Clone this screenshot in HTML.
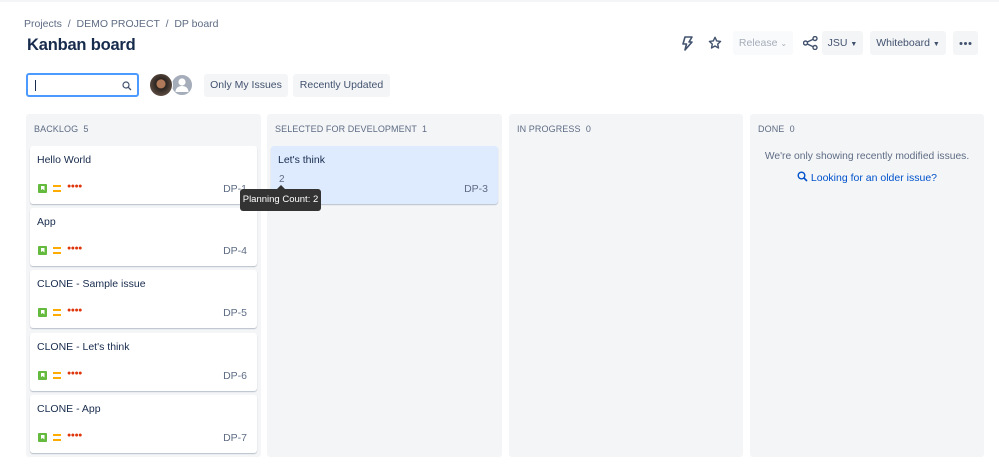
<!DOCTYPE html>
<html><head><meta charset="utf-8"><style>
*{box-sizing:border-box;margin:0;padding:0}
body{width:999px;height:471px;background:#fff;font-family:"Liberation Sans",sans-serif;position:relative;overflow:hidden;color:#172b4d}
.topline{position:absolute;left:0;top:0;width:999px;height:2px;background:#f4f5f7}
.a{position:absolute}
.crumb{left:24px;top:18px;font-size:10.5px;color:#5e6c84}
h1{position:absolute;left:27px;top:36px;font-size:16.5px;font-weight:bold;color:#172b4d;letter-spacing:-0.2px}
.btn{position:absolute;height:24px;background:#f4f5f7;border-radius:3px;font-size:10.5px;color:#42526e;line-height:24px;text-align:center}
.search{left:26px;top:73px;width:113px;height:24px;border:2px solid #4c9aff;border-radius:3px}
.col{position:absolute;top:114px;height:343px;background:#f4f5f7;border-radius:3px}
.ch{position:absolute;left:8px;top:10px;font-size:9px;color:#5e6c84;letter-spacing:0.1px}
.card{position:absolute;left:4px;width:227px;height:58px;background:#fff;border-radius:3px;box-shadow:0 1px 1px rgba(9,30,66,.25)}
.card .t{position:absolute;left:7px;top:8px;font-size:10.5px;color:#172b4d}
.card .k{position:absolute;right:10px;top:37px;font-size:10.5px;color:#5e6c84}
.ic{position:absolute;left:8px;top:38px;width:9px;height:9px;background:#63ba3c;border-radius:1px}
.ic:after{content:"";position:absolute;left:2.5px;top:1.5px;width:4px;height:5px;background:#fff;clip-path:polygon(0 0,100% 0,100% 100%,50% 70%,0 100%)}
.pr{position:absolute;left:23px;top:39px;width:8px;height:7px;border-top:2px solid #ffab00;border-bottom:2px solid #ffab00}
.dots{position:absolute;left:37px;top:37px;font-size:7px;color:#de350b;letter-spacing:-0.5px}
</style></head><body>
<div class="topline"></div>
<div class="a crumb">Projects &nbsp;/&nbsp; DEMO PROJECT &nbsp;/&nbsp; DP board</div>
<h1>Kanban board</h1>

<svg class="a" style="left:680px;top:36px" width="14" height="15" viewBox="0 0 14 15"><path d="M5 1h7l-3 5h3L5 14l1.5-6H3z" fill="none" stroke="#42526e" stroke-width="1.6" stroke-linejoin="round"/></svg>
<svg class="a" style="left:708px;top:36px" width="14" height="14" viewBox="0 0 14 14"><path d="M7 1.3l1.7 3.6 3.9.5-2.9 2.7.8 3.9L7 10l-3.5 2 .8-3.9L1.4 5.4l3.9-.5z" fill="none" stroke="#42526e" stroke-width="1.4" stroke-linejoin="round"/></svg>
<div class="btn" style="left:733px;top:31px;width:60px;color:#a5adba;background:#f9fafb">Release <span style="font-size:8px">&#8964;</span></div>
<svg class="a" style="left:803px;top:36px" width="15" height="14" viewBox="0 0 15 14"><circle cx="12" cy="2.5" r="2" fill="none" stroke="#42526e" stroke-width="1.4"/><circle cx="2.5" cy="7" r="2" fill="none" stroke="#42526e" stroke-width="1.4"/><circle cx="12" cy="11.5" r="2" fill="none" stroke="#42526e" stroke-width="1.4"/><path d="M4.3 6l5.9-2.7M4.3 8l5.9 2.7" stroke="#42526e" stroke-width="1.4"/></svg>
<div class="btn" style="left:822px;top:31px;width:41px">JSU <span style="font-size:7px">&#9660;</span></div>
<div class="btn" style="left:870px;top:31px;width:76px">Whiteboard <span style="font-size:7px">&#9660;</span></div>
<div class="btn" style="left:953px;top:31px;width:25px"><svg width="25" height="24" viewBox="0 0 25 24" style="position:absolute;left:0;top:0"><circle cx="8" cy="12.5" r="1.5" fill="#42526e"/><circle cx="12.5" cy="12.5" r="1.5" fill="#42526e"/><circle cx="17" cy="12.5" r="1.5" fill="#42526e"/></svg></div>

<div class="a search"><div class="a" style="left:7px;top:5px;width:1px;height:11px;background:#172b4d"></div>
<svg class="a" style="left:94px;top:6px" width="10" height="10" viewBox="0 0 10 10"><circle cx="4" cy="4" r="3" fill="none" stroke="#42526e" stroke-width="1.2"/><path d="M6.3 6.3L9 9" stroke="#42526e" stroke-width="1.3"/></svg></div>
<div class="a" style="left:170px;top:73px;width:24px;height:24px;border-radius:50%;background:#a5adba;border:2px solid #fff"><svg width="20" height="20" viewBox="0 0 20 20" style="position:absolute;left:0;top:0"><circle cx="10" cy="7" r="3.6" fill="#fff"/><path d="M3.5 17c0-4 3-6 6.5-6s6.5 2 6.5 6z" fill="#fff"/></svg></div>
<div class="a" style="left:149px;top:73px;width:24px;height:24px;border-radius:50%;background:radial-gradient(circle at 50% 45%,#b07a5a 0 25%,#2b2420 30%,#5a4a40 70%);border:1px solid #fff"></div>
<div class="btn" style="left:204px;top:74px;width:84px;height:23px;line-height:23px">Only My Issues</div>
<div class="btn" style="left:293px;top:74px;width:97px;height:23px;line-height:23px">Recently Updated</div>

<div class="col" style="left:26px;width:235px"><div class="ch">BACKLOG &nbsp;5</div>
<div class="card" style="top:32px"><div class="t">Hello World</div><div class="ic"></div><div class="pr"></div><div class="dots">●●●●</div><div class="k">DP-1</div></div>
<div class="card" style="top:94px"><div class="t">App</div><div class="ic"></div><div class="pr"></div><div class="dots">●●●●</div><div class="k">DP-4</div></div>
<div class="card" style="top:156px"><div class="t">CLONE - Sample issue</div><div class="ic"></div><div class="pr"></div><div class="dots">●●●●</div><div class="k">DP-5</div></div>
<div class="card" style="top:219px"><div class="t">CLONE - Let's think</div><div class="ic"></div><div class="pr"></div><div class="dots">●●●●</div><div class="k">DP-6</div></div>
<div class="card" style="top:281px"><div class="t">CLONE - App</div><div class="ic"></div><div class="pr"></div><div class="dots">●●●●</div><div class="k">DP-7</div></div>
</div>
<div class="col" style="left:267px;width:235px"><div class="ch">SELECTED FOR DEVELOPMENT &nbsp;1</div>
<div class="card" style="top:32px;background:#deebff"><div class="t">Let's think</div><div class="a" style="left:8px;top:28px;font-size:10px;color:#5e6c84">2</div><div class="k">DP-3</div></div>
</div>
<div class="col" style="left:509px;width:234px"><div class="ch">IN PROGRESS &nbsp;0</div></div>
<div class="col" style="left:750px;width:234px"><div class="ch">DONE &nbsp;0</div>
<div class="a" style="left:0;width:234px;top:37px;text-align:center;font-size:10.3px;color:#5e6c84">We're only showing recently modified issues.</div>
<div class="a" style="left:0;width:234px;top:57px;text-align:center;font-size:10.5px;color:#0052cc"><svg width="11" height="11" viewBox="0 0 11 11" style="vertical-align:-1px"><circle cx="4.5" cy="4.5" r="3.3" fill="none" stroke="#0052cc" stroke-width="1.4"/><path d="M7 7l3 3" stroke="#0052cc" stroke-width="1.6"/></svg> Looking for an older issue?</div>
</div>

<div class="a" style="left:277px;top:185px;width:0;height:0;border-left:4px solid transparent;border-right:4px solid transparent;border-bottom:4px solid #333"></div>
<div class="a" style="left:240px;top:189px;width:81px;height:22px;background:#333;border-radius:3px;color:#fff;font-size:9.5px;line-height:22px;text-align:center">Planning Count: 2</div>
</body></html>
